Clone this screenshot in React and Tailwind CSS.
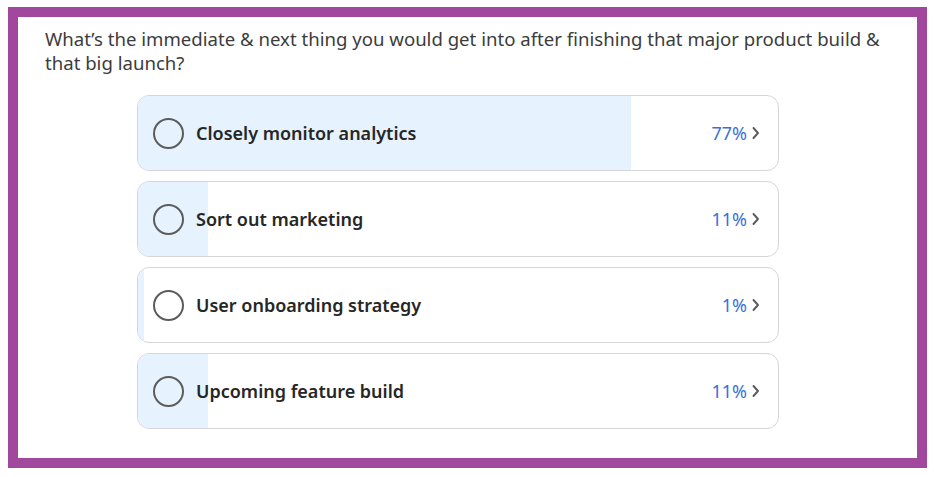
import React from "react";

const options = [
  { label: "Closely monitor analytics", pct: 77 },
  { label: "Sort out marketing", pct: 11 },
  { label: "User onboarding strategy", pct: 1 },
  { label: "Upcoming feature build", pct: 11 },
];

function Chevron() {
  return (
    <svg width="11" height="16" viewBox="0 0 11 16" className="ml-[3px]">
      <path d="M3.5 3 L8 8 L3.5 13" fill="none" stroke="#5a5a5a" strokeWidth="1.9" strokeLinecap="round" strokeLinejoin="round" />
    </svg>
  );
}

export default function App() {
  return (
    <div className="w-[934px] h-[477px] bg-white pt-[7px] pl-[8px]" style={{ fontFamily: '"Noto Sans", "Open Sans", sans-serif' }}>
      <div className="w-[919px] h-[461px] border-[10px] border-[#a2479e] bg-white pl-[27px] pt-[10px]">
        <p className="text-[18.6px] leading-[24px] text-[#3c3c3c] w-[850px]">
          What’s the immediate &amp; next thing you would get into after finishing that major product build &amp; that big launch?
        </p>
        <div className="flex flex-col gap-[10px] ml-[92px] mt-[20px] w-[642px]">
          {options.map((o) => (
            <div key={o.label} className="relative h-[76px] rounded-[12px] border-[1.5px] border-[#d6d6d6] overflow-hidden bg-white">
              <div className="absolute left-0 top-0 bottom-0 bg-[#e6f2fe]" style={{ width: `${o.pct}%` }} />
              <div className="relative flex items-center h-full pl-[15px] pr-[17px]">
                <div className="w-[31px] h-[31px] rounded-full border-2 border-[#5c5c5c] shrink-0" />
                <span className="ml-[12px] text-[18px] font-semibold text-[#262626]">{o.label}</span>
                <span className="ml-auto text-[18px] text-[#3a6fd6]">{o.pct}%</span>
                <Chevron />
              </div>
            </div>
          ))}
        </div>
      </div>
    </div>
  );
}
